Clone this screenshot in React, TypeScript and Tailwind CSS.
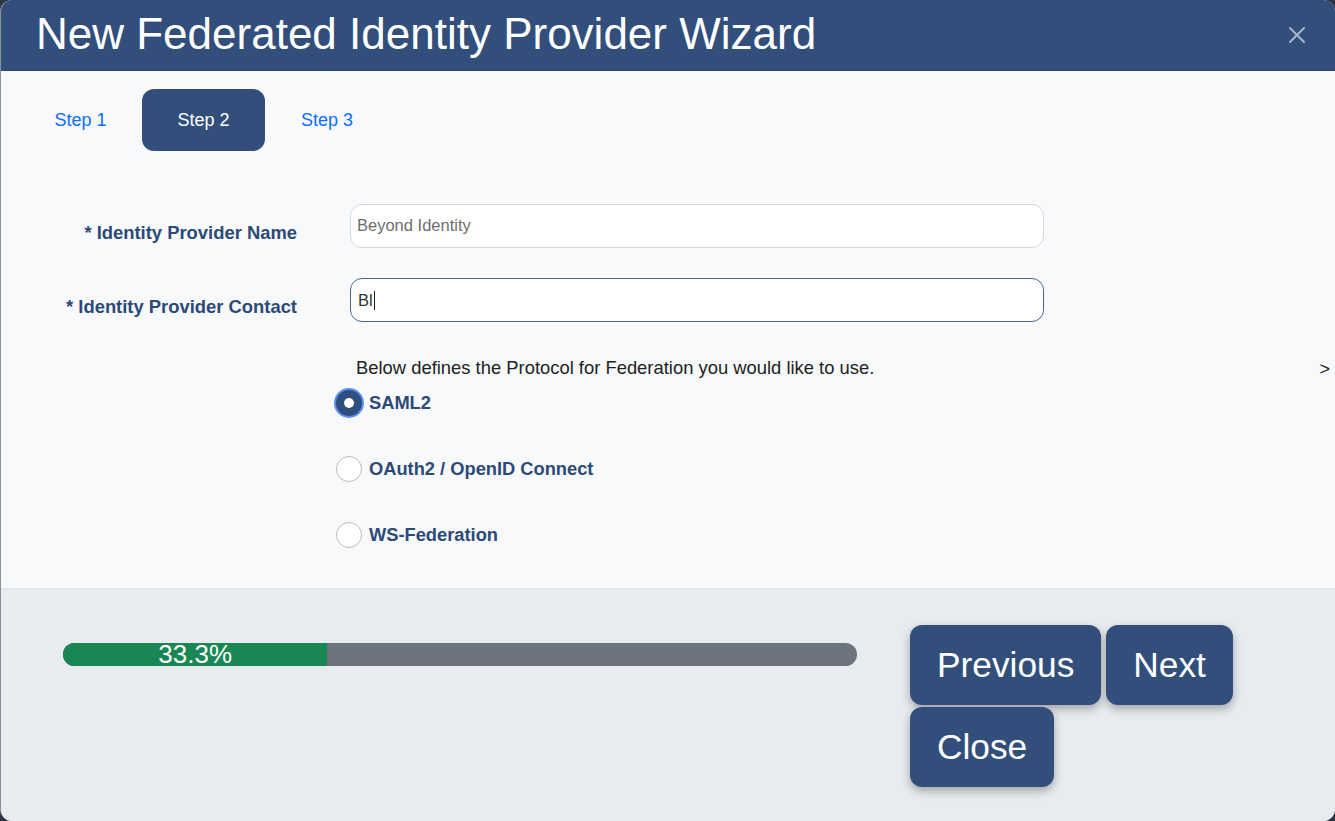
import React from "react";

export default function App() {
  const font = { fontFamily: '"Liberation Sans", Arial, Helvetica, sans-serif' };
  const pct = 33.3;
  return (
    <div className="w-[1335px] h-[821px] bg-[#2b3442] overflow-hidden" style={font}>
      <div className="w-full h-full rounded-[12px] overflow-hidden flex flex-col bg-[#f8f9fb] border-l border-[#8a8f98]">
        {/* Header */}
        <div className="h-[71px] shrink-0 bg-[#324f7b] border-b border-[#2a4570] flex items-center justify-between pl-[35px] pr-[28px] pb-[3px]">
          <h1 className="text-white text-[44px] leading-none">New Federated Identity Provider Wizard</h1>
          <svg width="20" height="20" viewBox="0 0 20 20" className="text-[#aab6c8] mt-[3px]">
            <path d="M3 3 L17 17 M17 3 L3 17" stroke="currentColor" strokeWidth="2" strokeLinecap="round" />
          </svg>
        </div>

        {/* Body */}
        <div className="flex-1 flex flex-col relative">
          <div className="flex pl-[18px] pt-[18px]">
            <button className="w-[123px] h-[62px] text-[18px] text-[#0d6efd] rounded-[12px] pt-[1px]">Step 1</button>
            <button className="w-[123px] h-[62px] text-[18px] text-white bg-[#324f7b] rounded-[12px] pt-[1px]">Step 2</button>
            <button className="w-[124px] h-[62px] text-[18px] text-[#0d6efd] rounded-[12px] pt-[1px]">Step 3</button>
          </div>

          <div className="flex items-start mt-[53px]">
            <label className="w-[296px] text-right font-bold text-[18.4px] leading-[24px] pt-[17px] text-[#2c4a78]">* Identity Provider Name</label>
            <div className="ml-[53px] w-[694px] h-[44px] rounded-[12px] border border-[#d3d8df] bg-white px-[6px] flex items-center text-[16.5px] text-[#6e6e6e] pb-[2px]">
              Beyond Identity
            </div>
          </div>
          <div className="flex items-start mt-[30px]">
            <label className="w-[296px] text-right font-bold text-[18.4px] leading-[24px] pt-[17px] text-[#2c4a78]">* Identity Provider Contact</label>
            <div className="ml-[53px] w-[694px] h-[44px] rounded-[12px] border border-[#4a6694] bg-white px-[7px] flex items-center text-[16.5px] text-[#333]">
              <span>Bl</span>
              <span className="inline-block w-[1px] h-[19px] bg-[#222] ml-[1px]" />
            </div>
          </div>

          <div className="pl-[355px] mt-[34px] text-[18.4px] leading-[24px] text-[#222]">
            Below defines the Protocol for Federation you would like to use.
          </div>
          <div className="absolute right-[5px] top-[285px] text-[18px] text-[#222]">&gt;</div>

          <div className="pl-[335px] flex flex-col">
            <div className="flex items-center h-[26px] mt-[10px]">
              <span className="w-[26px] h-[26px] rounded-full bg-[#2f4e7d] ring-[2px] ring-[#5b8ff0] flex items-center justify-center">
                <span className="w-[10px] h-[10px] rounded-full bg-white" />
              </span>
              <span className="ml-[7px] font-bold text-[18.3px] text-[#2c4a78]">SAML2</span>
            </div>
            <div className="flex items-center h-[26px] mt-[40px]">
              <span className="w-[26px] h-[26px] rounded-full bg-white border border-[#bcbcbc]" />
              <span className="ml-[7px] font-bold text-[18.3px] text-[#2c4a78]">OAuth2 / OpenID Connect</span>
            </div>
            <div className="flex items-center h-[26px] mt-[40px]">
              <span className="w-[26px] h-[26px] rounded-full bg-white border border-[#bcbcbc]" />
              <span className="ml-[7px] font-bold text-[18.3px] text-[#2c4a78]">WS-Federation</span>
            </div>
          </div>
        </div>

        {/* Footer */}
        <div className="h-[233px] shrink-0 bg-[#e8ebef] border-t border-[#e0e4e9] flex items-start pl-[62px]">
          <div className="mt-[54px] w-[794px] h-[23px] rounded-full bg-[#6c757d] flex">
            <div className="h-full bg-[#198754] rounded-l-full text-white text-[26px] leading-[23px] text-center whitespace-nowrap" style={{ width: `${pct}%` }}>
              33.3%
            </div>
          </div>
          <div className="ml-[53px] mt-[36px] w-[330px] flex flex-wrap gap-x-[5px] gap-y-[2px]">
            <button className="h-[80px] px-[27px] rounded-[12px] bg-[#324f7b] text-white text-[35.3px] shadow-[0_4px_10px_rgba(0,0,0,0.3)]">Previous</button>
            <button className="h-[80px] px-[27px] rounded-[12px] bg-[#324f7b] text-white text-[35.3px] shadow-[0_4px_10px_rgba(0,0,0,0.3)]">Next</button>
            <button className="h-[80px] px-[27px] rounded-[12px] bg-[#324f7b] text-white text-[35.3px] shadow-[0_4px_10px_rgba(0,0,0,0.3)]">Close</button>
          </div>
        </div>
      </div>
    </div>
  );
}
